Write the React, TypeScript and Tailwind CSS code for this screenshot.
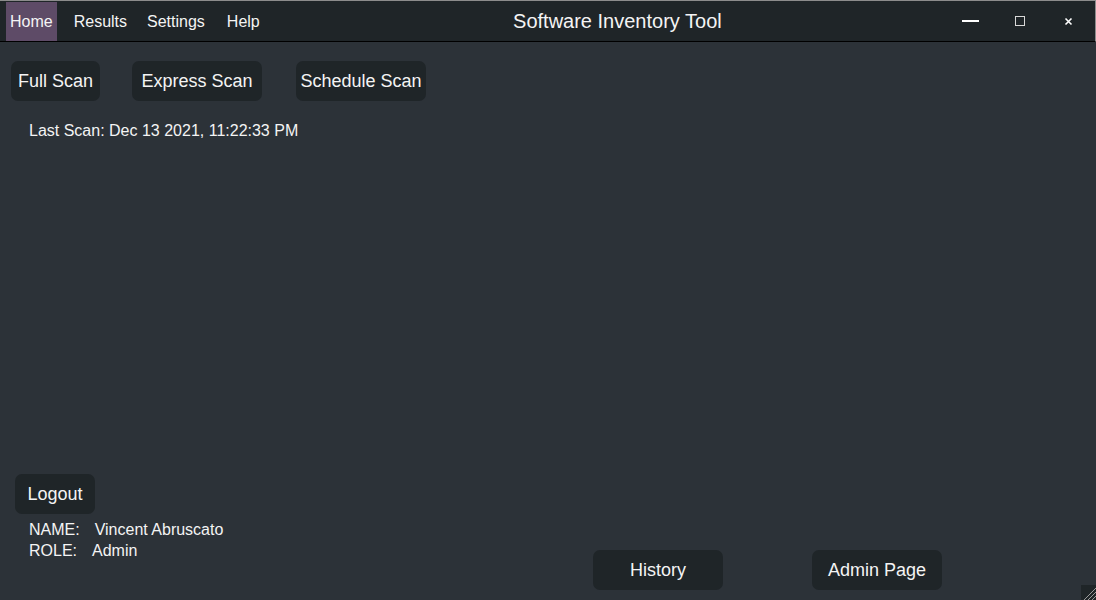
export default function App() {
  const font = { fontFamily: '"Liberation Sans", Arial, sans-serif' }
  return (
    <div className="w-[1096px] h-[600px] bg-[#2c3238] text-[#f4f4f4] flex flex-col relative overflow-hidden" style={font}>
      {/* Title bar */}
      <header className="h-[42px] flex items-stretch bg-[#1f2528] border-t border-r border-t-[#8c8c8c] border-r-[#8c8c8c] border-b border-b-black shrink-0">
        <nav className="flex items-stretch text-[16px] pl-[6px] gap-[13px] pt-[1px]">
          <span className="bg-[#5e4b67] px-[4px] flex items-center">Home</span>
          <span className="px-[4px] flex items-center">Results</span>
          <span className="px-[3px] flex items-center">Settings</span>
          <span className="ml-[3px] px-[3px] flex items-center">Help</span>
        </nav>
        <div className="flex-1 flex items-center justify-center pl-[26px] text-[20px]">Software Inventory Tool</div>
        <div className="flex items-stretch pr-[2px]">
          <button className="w-[49px] flex items-center justify-center">
            <span className="block w-[17px] h-[2px] bg-white" />
          </button>
          <button className="w-[49px] flex items-center justify-center">
            <span className="block w-[10px] h-[10px] border-[1.5px] border-[#d8d8d8]" />
          </button>
          <button className="w-[49px] flex items-center justify-center">
            <svg width="9" height="9" viewBox="0 0 9 9">
              <path d="M1.5 1.5L7.5 7.5M7.5 1.5L1.5 7.5" stroke="white" strokeWidth="1.6" />
            </svg>
          </button>
        </div>
      </header>

      {/* Main */}
      <main className="flex-1 flex flex-col pt-[19px] pb-[10px]">
        <div className="flex text-[18px]">
          <button className="ml-[11px] w-[89px] h-[40px] rounded-[7px] bg-[#1f2528] flex items-center justify-center">Full Scan</button>
          <button className="ml-[32px] w-[130px] h-[40px] rounded-[7px] bg-[#1f2528] flex items-center justify-center">Express Scan</button>
          <button className="ml-[34px] w-[130px] h-[40px] rounded-[7px] bg-[#1f2528] flex items-center justify-center whitespace-nowrap">Schedule Scan</button>
        </div>
        <p className="ml-[29px] mt-[21px] text-[16px] leading-[18px]">Last Scan: Dec 13 2021, 11:22:33 PM</p>

        <div className="flex-1" />

        <div className="flex items-end">
          <div className="w-[240px] flex flex-col mb-[29px]">
            <button className="ml-[15px] w-[80px] h-[40px] rounded-[7px] bg-[#1f2528] text-[18px] flex items-center justify-center">Logout</button>
            <div className="ml-[29px] mt-[5px] text-[16px] leading-[21px]">
              <div className="flex gap-[15px]"><span>NAME:</span><span>Vincent Abruscato</span></div>
              <div className="flex gap-[15px]"><span>ROLE:</span><span>Admin</span></div>
            </div>
          </div>
          <button className="ml-[353px] w-[130px] h-[40px] rounded-[7px] bg-[#1f2528] text-[18px] flex items-center justify-center">History</button>
          <button className="ml-[89px] w-[130px] h-[40px] rounded-[7px] bg-[#1f2528] text-[18px] flex items-center justify-center">Admin Page</button>
        </div>
      </main>

      {/* Resize grip */}
      <div className="absolute right-0 bottom-0 w-[15px] h-[15px] bg-[#1f2528]">
        <svg width="15" height="15" viewBox="0 0 15 15">
          <path d="M3 15L15 3M7 15L15 7M11 15L15 11" stroke="#9a9a9a" strokeWidth="1" />
        </svg>
      </div>
    </div>
  )
}
